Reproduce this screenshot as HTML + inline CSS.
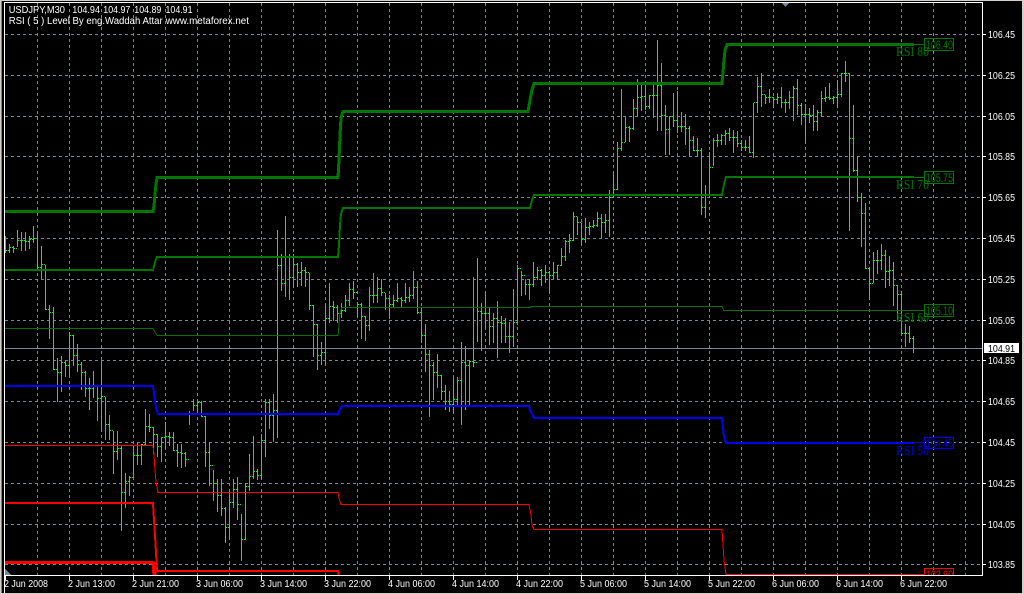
<!DOCTYPE html>
<html><head><meta charset="utf-8"><title>USDJPY,M30</title>
<style>
html,body{margin:0;padding:0;background:#000;width:1024px;height:594px;overflow:hidden}
svg{display:block}
text{font-family:"Liberation Sans",sans-serif;font-size:10px}
.a text{fill:#fff}
.s{font-family:"Liberation Serif",serif;font-size:14px}
.l{font-size:12px}
</style></head><body>
<svg width="1024" height="594" viewBox="0 0 1024 594" xmlns="http://www.w3.org/2000/svg">
<rect width="1024" height="594" fill="#000"/>
<g shape-rendering="crispEdges">
<rect x="0" y="0" width="1024" height="1" fill="#d4d0c8"/>
<rect x="0" y="0" width="1" height="594" fill="#d4d0c8"/>
<rect x="1" y="1" width="1" height="592" fill="#808080"/>
<rect x="1022" y="0" width="2" height="594" fill="#d4d0c8"/>
<rect x="0" y="593" width="1024" height="1" fill="#d4d0c8"/>
<!-- grid -->
<path fill="none" stroke="#778899" stroke-width="1" stroke-dasharray="3 3" d="M5 34.5H982M5 75.5H982M5 116.5H982M5 156.5H982M5 197.5H982M5 238.5H982M5 279.5H982M5 320.5H982M5 360.5H982M5 401.5H982M5 442.5H982M5 483.5H982M5 524.5H982M5 564.5H982M37.5 3V575M69.5 3V575M101.5 3V575M133.5 3V575M165.5 3V575M197.5 3V575M229.5 3V575M261.5 3V575M293.5 3V575M325.5 3V575M357.5 3V575M389.5 3V575M421.5 3V575M453.5 3V575M485.5 3V575M517.5 3V575M549.5 3V575M581.5 3V575M613.5 3V575M645.5 3V575M677.5 3V575M709.5 3V575M741.5 3V575M773.5 3V575M805.5 3V575M837.5 3V575M869.5 3V575M901.5 3V575M933.5 3V575M965.5 3V575"/>
<!-- bars -->
<path fill="none" stroke="#22e022" stroke-width="1" d="M5.5 236V253M9.5 244V253M13.5 246V253M17.5 230V247M21.5 232V251M25.5 232V251M29.5 236V249M33.5 226V243M37.5 234V268M41.5 246V279M45.5 265V310M49.5 305V339M53.5 307V370M57.5 358V402M61.5 356V392M65.5 360V377M69.5 332V376M73.5 335V366M77.5 344V372M81.5 362V390M85.5 371V397M89.5 378V410M93.5 371V398M97.5 387V421M101.5 361V431M105.5 397V440M109.5 415V440M113.5 431V474M117.5 431V460M121.5 446V531M125.5 473V508M129.5 476V496M133.5 446V478M137.5 443V465M141.5 444V465M145.5 409V446M149.5 414V432M153.5 427V454M157.5 434V457M161.5 437V462M165.5 422V449M169.5 432V446M173.5 432V451M177.5 444V467M181.5 444V468M185.5 452V467M189.5 411V425M193.5 399V411M197.5 401V411M201.5 401V417M205.5 416V467M209.5 442V486M213.5 470V501M217.5 479V512M221.5 479V516M225.5 507V543M229.5 489V539M233.5 479V508M237.5 477V520M241.5 514V561M245.5 483V540M249.5 454V491M253.5 436V479M257.5 469V480M261.5 434V480M265.5 399V457M269.5 399V429M273.5 394V442M277.5 230V438M281.5 254V291M285.5 216V297M289.5 254V300M293.5 254V287M297.5 263V287M301.5 262V286M305.5 267V287M309.5 273V310M313.5 305V357M317.5 324V370M321.5 342V365M325.5 303V365M329.5 283V323M333.5 301V321M337.5 305V323M341.5 303V318M345.5 295V312M349.5 283V306M353.5 281V299M357.5 302V317M361.5 303V339M365.5 316V341M369.5 287V331M373.5 273V303M377.5 277V303M381.5 279V296M385.5 293V310M389.5 295V319M393.5 295V307M397.5 283V302M401.5 297V307M405.5 283V303M409.5 287V302M413.5 271V299M417.5 281V314M421.5 308V343M425.5 324V372M429.5 350V417M433.5 362V400M437.5 354V388M441.5 375V400M445.5 385V410M449.5 391V412M453.5 378V413M457.5 377V407M461.5 342V425M465.5 346V410M469.5 360V407M473.5 277V367M477.5 258V342M481.5 303V351M485.5 291V328M489.5 308V345M493.5 313V343M497.5 301V358M501.5 316V343M505.5 318V343M509.5 322V353M513.5 289V347M517.5 265V325M521.5 271V296M525.5 279V295M529.5 279V300M533.5 262V287M537.5 267V280M541.5 269V286M545.5 265V283M549.5 271V293M553.5 262V279M557.5 265V280M561.5 248V266M565.5 240V261M569.5 234V253M573.5 212V241M577.5 217V235M581.5 223V245M585.5 218V243M589.5 222V235M593.5 220V228M597.5 212V227M601.5 214V238M605.5 214V233M609.5 190V237M613.5 171V198M617.5 142V190M621.5 89V151M625.5 117V142M629.5 126V142M633.5 99V130M637.5 79V117M641.5 82V111M645.5 82V110M649.5 95V109M653.5 85V118M657.5 40V131M661.5 63V131M665.5 105V155M669.5 116V155M673.5 93V127M677.5 91V133M681.5 112V132M685.5 114V145M689.5 126V157M693.5 136V151M697.5 138V156M701.5 148V215M705.5 185V218M709.5 152V198M713.5 138V166M717.5 134V147M721.5 134V145M725.5 130V145M729.5 128V141M733.5 130V153M737.5 131V147M741.5 140V151M745.5 140V151M749.5 136V153M753.5 103V158M757.5 77V113M761.5 73V107M765.5 95V104M769.5 89V103M773.5 97V108M777.5 93V104M781.5 87V108M785.5 99V113M789.5 91V109M793.5 86V121M797.5 79V115M801.5 103V125M805.5 104V143M809.5 108V123M813.5 105V131M817.5 110V131M821.5 91V116M825.5 87V102M829.5 83V100M833.5 96V104M837.5 80V107M841.5 73V97M845.5 61V82M849.5 73V231M853.5 105V172M857.5 156V202M861.5 193V247M865.5 203V269M869.5 267V300M873.5 252V283M877.5 250V274M881.5 244V270M885.5 250V288M889.5 256V286M893.5 262V306M897.5 285V320M901.5 291V334M905.5 324V347M909.5 326V343M913.5 336V353"/>
<path fill="none" stroke="#22e022" stroke-width="1" stroke-dasharray="1 1" d="M6 250.5h3M10 247.5h3M14 248.5h3M18 240.5h3M22 240.5h3M26 241.5h3M30 239.5h3M34 238.5h3M38 267.5h3M42 264.5h3M46 309.5h3M50 312.5h3M54 369.5h3M58 372.5h3M62 362.5h3M66 365.5h3M70 335.5h3M74 355.5h3M78 364.5h3M82 372.5h3M86 388.5h3M90 388.5h3M94 386.5h3M98 398.5h3M102 396.5h3M106 424.5h3M110 430.5h3M114 451.5h3M118 448.5h3M122 492.5h3M126 481.5h3M130 477.5h3M134 455.5h3M138 455.5h3M142 444.5h3M146 426.5h3M150 427.5h3M154 434.5h3M158 446.5h3M162 437.5h3M166 436.5h3M170 437.5h3M174 450.5h3M178 452.5h3M182 453.5h3M186 459.5h3M190 414.5h3M194 405.5h3M198 402.5h3M202 416.5h3M206 452.5h3M210 465.5h3M214 483.5h3M218 495.5h3M222 508.5h3M226 527.5h3M230 502.5h3M234 489.5h3M238 504.5h3M242 539.5h3M246 486.5h3M250 476.5h3M254 471.5h3M258 475.5h3M262 440.5h3M266 402.5h3M270 415.5h3M274 410.5h3M278 265.5h3M282 283.5h3M286 256.5h3M290 277.5h3M294 264.5h3M298 272.5h3M302 270.5h3M306 272.5h3M310 305.5h3M314 324.5h3M318 355.5h3M322 352.5h3M326 318.5h3M330 306.5h3M334 307.5h3M338 313.5h3M342 310.5h3M346 300.5h3M350 289.5h3M354 292.5h3M358 304.5h3M362 316.5h3M366 325.5h3M370 295.5h3M374 295.5h3M378 288.5h3M382 292.5h3M386 298.5h3M390 304.5h3M394 300.5h3M398 298.5h3M402 300.5h3M406 297.5h3M410 295.5h3M414 287.5h3M418 312.5h3M422 335.5h3M426 354.5h3M430 365.5h3M434 372.5h3M438 375.5h3M442 391.5h3M446 401.5h3M450 404.5h3M454 399.5h3M458 380.5h3M462 362.5h3M466 365.5h3M470 361.5h3M474 362.5h3M478 311.5h3M482 313.5h3M486 313.5h3M490 326.5h3M494 318.5h3M498 322.5h3M502 323.5h3M506 336.5h3M510 336.5h3M514 322.5h3M518 268.5h3M522 275.5h3M526 284.5h3M530 284.5h3M534 277.5h3M538 270.5h3M542 275.5h3M546 272.5h3M550 275.5h3M554 272.5h3M558 265.5h3M562 256.5h3M566 241.5h3M570 240.5h3M574 216.5h3M578 222.5h3M582 239.5h3M586 227.5h3M590 226.5h3M594 225.5h3M598 218.5h3M602 222.5h3M606 220.5h3M610 197.5h3M614 189.5h3M618 148.5h3M622 142.5h3M626 127.5h3M630 128.5h3M634 108.5h3M638 97.5h3M642 96.5h3M646 106.5h3M650 95.5h3M654 95.5h3M658 85.5h3M662 115.5h3M666 129.5h3M670 116.5h3M674 120.5h3M678 126.5h3M682 126.5h3M686 128.5h3M690 140.5h3M694 150.5h3M698 150.5h3M702 207.5h3M706 195.5h3M710 167.5h3M714 140.5h3M718 140.5h3M722 135.5h3M726 133.5h3M730 137.5h3M734 137.5h3M738 143.5h3M742 147.5h3M746 147.5h3M750 152.5h3M754 102.5h3M758 86.5h3M762 94.5h3M766 97.5h3M770 97.5h3M774 99.5h3M778 97.5h3M782 102.5h3M786 102.5h3M790 97.5h3M794 88.5h3M798 105.5h3M802 114.5h3M806 114.5h3M810 115.5h3M814 121.5h3M818 112.5h3M822 98.5h3M826 97.5h3M830 98.5h3M834 97.5h3M838 94.5h3M842 73.5h3M846 73.5h3M850 138.5h3M854 170.5h3M858 197.5h3M862 213.5h3M866 268.5h3M870 283.5h3M874 260.5h3M878 260.5h3M882 255.5h3M886 271.5h3M890 270.5h3M894 285.5h3M898 294.5h3M902 333.5h3M906 333.5h3M910 338.5h3"/>
<!-- current price line -->
<rect x="5" y="348" width="978" height="1" fill="#778899"/>
<!-- green lines -->
<path fill="none" stroke="#007800" stroke-width="3" d="M5 211.5H153L154 206L155 194L156 184L157 177.5H338L339 160L340 135L341 118L343 111.5H528L530 100L532 90L534 83.5H722L723 72L724 60L725 50L727 44.5H914"/>
<path fill="none" stroke="#007800" stroke-width="1" d="M914 44.5H924M914 177.5H924"/>
<path fill="none" stroke="#007800" stroke-width="2" d="M5 270H153L154 266L155 262L157 257H338L339 245L340 225L341 214L343 208H530L531 204L532 200L534 195H722L723 190L724 184L726 177H914"/>
<path fill="none" stroke="#0b6e0b" stroke-width="1" d="M5 328.5H153L155 332L157 335.5H338L339 325L340 312L342 307.5H531V306.5H722L724 310.5H924"/>
<!-- blue -->
<path fill="none" stroke="#0000ff" stroke-width="2" d="M5 386H153L154 392L155 400L156 408L158 414H338L340 409L342 406H529L530 410L532 414L534 418H722L723 428L724 436L726 443H914"/>
<path fill="none" stroke="#0000e0" stroke-width="1" d="M914 442.5H924"/>
<!-- red -->
<path fill="none" stroke="#ff0000" stroke-width="1" d="M5 445.5H153L154 455L155 470L156 482L158 492.5H338L339 498L341 504.5H529L531 515L532 525L534 529.5H722L723 545L724 560L726 574.5H924"/>
<path fill="none" stroke="#ff0000" stroke-width="2" d="M5 503H153L154 520L155 535L156 553L157 571H338L339 576"/>
<path fill="none" stroke="#ff0000" stroke-width="3" d="M5 562.5H153L154 576M155 562V576"/>
<path fill="#778899" d="M5 569L11 575H5Z"/>
<path fill="#778899" d="M781 2H790L785.5 7Z"/>
<!-- label boxes -->
<g fill="none" stroke-width="1">
<rect x="924.5" y="38.5" width="29" height="12" stroke="#007800"/>
<rect x="924.5" y="171.5" width="29" height="12" stroke="#007800"/>
<rect x="924.5" y="304.5" width="29" height="12" stroke="#007800"/>
<rect x="924.5" y="437.5" width="29" height="11" stroke="#0000e0"/>
<rect x="924.5" y="568.5" width="29" height="8" stroke="#ff0000"/>
</g>
</g>
<!-- label text -->
<g>
<text class="l" x="926" y="49" fill="#007800" textLength="27" lengthAdjust="spacingAndGlyphs">106.40</text>
<text class="l" x="926" y="182" fill="#007800" textLength="27" lengthAdjust="spacingAndGlyphs">105.75</text>
<text class="l" x="926" y="315" fill="#007800" textLength="27" lengthAdjust="spacingAndGlyphs">105.10</text>
<text class="l" x="926" y="447.5" fill="#0000e0" textLength="27" lengthAdjust="spacingAndGlyphs">104.45</text>
<text class="s" x="896" y="56" fill="#007800" textLength="33" lengthAdjust="spacingAndGlyphs">RSI 80</text>
<text class="s" x="896" y="189" fill="#007800" textLength="33" lengthAdjust="spacingAndGlyphs">RSI 70</text>
<text class="s" x="896" y="322" fill="#007800" textLength="33" lengthAdjust="spacingAndGlyphs">RSI 60</text>
<text class="s" x="896" y="455" fill="#0000e0" textLength="33" lengthAdjust="spacingAndGlyphs">RSI 50</text>
<text class="l" x="926" y="579" fill="#ff0000" textLength="27" lengthAdjust="spacingAndGlyphs">103.80</text>
</g>
<g shape-rendering="crispEdges">
<!-- masks below frame -->
<rect x="5" y="576" width="1017" height="17" fill="#000"/>
<!-- frame -->
<path fill="none" stroke="#fff" stroke-width="1" d="M4.5 593V2.5H982.5V575.5H4"/>
<path fill="none" stroke="#fff" stroke-width="1" d="M983 34.5h3M983 75.5h3M983 116.5h3M983 156.5h3M983 197.5h3M983 238.5h3M983 279.5h3M983 320.5h3M983 360.5h3M983 401.5h3M983 442.5h3M983 483.5h3M983 524.5h3M983 564.5h3M5.5 576v4M69.5 576v4M133.5 576v4M197.5 576v4M261.5 576v4M325.5 576v4M389.5 576v4M453.5 576v4M517.5 576v4M581.5 576v4M645.5 576v4M709.5 576v4M773.5 576v4M837.5 576v4M901.5 576v4"/>
<rect x="984" y="343" width="35" height="10" fill="#fff"/>
</g>
<g class="a">
<text x="8.7" y="13" textLength="56.3" lengthAdjust="spacingAndGlyphs">USDJPY,M30</text>
<text x="72.3" y="13" textLength="27.7" lengthAdjust="spacingAndGlyphs">104.94</text>
<text x="103.3" y="13" textLength="27" lengthAdjust="spacingAndGlyphs">104.97</text>
<text x="134.3" y="13" textLength="27" lengthAdjust="spacingAndGlyphs">104.89</text>
<text x="165.5" y="13" textLength="27" lengthAdjust="spacingAndGlyphs">104.91</text>
<text x="8.7" y="24" textLength="154" lengthAdjust="spacingAndGlyphs">RSI ( 5 ) Level By eng.Waddah Attar</text>
<text x="165.7" y="24" textLength="83.3" lengthAdjust="spacingAndGlyphs">www.metaforex.net</text>
<text x="988" y="38" textLength="27" lengthAdjust="spacingAndGlyphs">106.45</text>
<text x="988" y="79" textLength="27" lengthAdjust="spacingAndGlyphs">106.25</text>
<text x="988" y="120" textLength="27" lengthAdjust="spacingAndGlyphs">106.05</text>
<text x="988" y="160" textLength="27" lengthAdjust="spacingAndGlyphs">105.85</text>
<text x="988" y="201" textLength="27" lengthAdjust="spacingAndGlyphs">105.65</text>
<text x="988" y="242" textLength="27" lengthAdjust="spacingAndGlyphs">105.45</text>
<text x="988" y="283" textLength="27" lengthAdjust="spacingAndGlyphs">105.25</text>
<text x="988" y="324" textLength="27" lengthAdjust="spacingAndGlyphs">105.05</text>
<text x="988" y="364" textLength="27" lengthAdjust="spacingAndGlyphs">104.85</text>
<text x="988" y="405" textLength="27" lengthAdjust="spacingAndGlyphs">104.65</text>
<text x="988" y="446" textLength="27" lengthAdjust="spacingAndGlyphs">104.45</text>
<text x="988" y="487" textLength="27" lengthAdjust="spacingAndGlyphs">104.25</text>
<text x="988" y="528" textLength="27" lengthAdjust="spacingAndGlyphs">104.05</text>
<text x="988" y="568" textLength="27" lengthAdjust="spacingAndGlyphs">103.85</text>
<text x="4" y="587" textLength="44" lengthAdjust="spacingAndGlyphs">2 Jun 2008</text>
<text x="68" y="587" textLength="47" lengthAdjust="spacingAndGlyphs">2 Jun 13:00</text>
<text x="132" y="587" textLength="47" lengthAdjust="spacingAndGlyphs">2 Jun 21:00</text>
<text x="196" y="587" textLength="47" lengthAdjust="spacingAndGlyphs">3 Jun 06:00</text>
<text x="260" y="587" textLength="47" lengthAdjust="spacingAndGlyphs">3 Jun 14:00</text>
<text x="324" y="587" textLength="47" lengthAdjust="spacingAndGlyphs">3 Jun 22:00</text>
<text x="388" y="587" textLength="47" lengthAdjust="spacingAndGlyphs">4 Jun 06:00</text>
<text x="452" y="587" textLength="47" lengthAdjust="spacingAndGlyphs">4 Jun 14:00</text>
<text x="516" y="587" textLength="47" lengthAdjust="spacingAndGlyphs">4 Jun 22:00</text>
<text x="580" y="587" textLength="47" lengthAdjust="spacingAndGlyphs">5 Jun 06:00</text>
<text x="644" y="587" textLength="47" lengthAdjust="spacingAndGlyphs">5 Jun 14:00</text>
<text x="708" y="587" textLength="47" lengthAdjust="spacingAndGlyphs">5 Jun 22:00</text>
<text x="772" y="587" textLength="47" lengthAdjust="spacingAndGlyphs">6 Jun 06:00</text>
<text x="836" y="587" textLength="47" lengthAdjust="spacingAndGlyphs">6 Jun 14:00</text>
<text x="900" y="587" textLength="47" lengthAdjust="spacingAndGlyphs">6 Jun 22:00</text>
</g>
<text x="988" y="352" fill="#000" textLength="27" lengthAdjust="spacingAndGlyphs">104.91</text>
</svg>
</body></html>
